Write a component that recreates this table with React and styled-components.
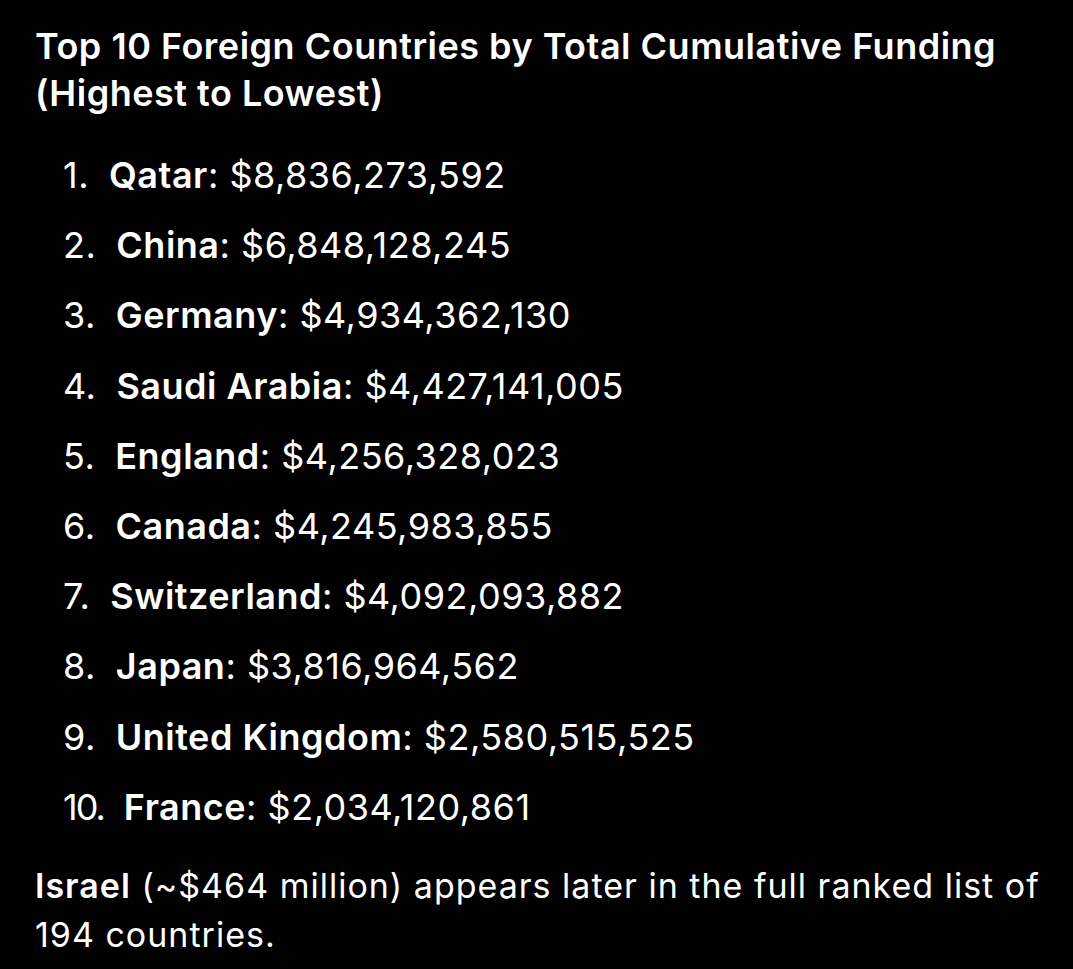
import React from "react";
import styled, { createGlobalStyle } from "styled-components";

const Global = createGlobalStyle`
  html, body { margin: 0; padding: 0; background: #000; }
  body { font-family: Inter, "Noto Sans", "Liberation Sans", sans-serif; color: #fff; }
`;

const Page = styled.div`
  width: 1073px;
  height: 969px;
  background: #000;
  box-sizing: border-box;
  padding: 23px 20px 0 35px;
  overflow: hidden;
`;

const Title = styled.h1`
  margin: 0;
  font-size: 36px;
  font-weight: 600;
  line-height: 47px;
  letter-spacing: 0.5px;
`;

const List = styled.ol`
  list-style: none;
  margin: 23px 0 0 0;
  padding: 0 0 0 28px;
  display: flex;
  flex-direction: column;
`;

const Item = styled.li`
  display: flex;
  align-items: baseline;
  gap: 20px;
  font-size: 36px;
  line-height: 70.2px;
  font-weight: 400;
  letter-spacing: 0.5px;
`;

const Num = styled.span`
  letter-spacing: ${(p) => (p.$wide ? "-2px" : "0.5px")};
`;

const Name = styled.strong`
  font-weight: 600;
`;

const Footer = styled.p`
  margin: 19px 0 0 0;
  font-size: 34px;
  line-height: 49px;
  letter-spacing: 1px;
`;

const data = [
  ["Qatar", "$8,836,273,592"],
  ["China", "$6,848,128,245"],
  ["Germany", "$4,934,362,130"],
  ["Saudi Arabia", "$4,427,141,005"],
  ["England", "$4,256,328,023"],
  ["Canada", "$4,245,983,855"],
  ["Switzerland", "$4,092,093,882"],
  ["Japan", "$3,816,964,562"],
  ["United Kingdom", "$2,580,515,525"],
  ["France", "$2,034,120,861"],
];

export default function App() {
  return (
    <>
      <Global />
      <Page>
        <Title>
          Top 10 Foreign Countries by Total Cumulative Funding
          <br />
          (Highest to Lowest)
        </Title>
        <List>
          {data.map(([name, amount], i) => (
            <Item key={name}>
              <Num $wide={i + 1 >= 10}>{i + 1}.</Num>
              <span>
                <Name>{name}</Name>: {amount}
              </span>
            </Item>
          ))}
        </List>
        <Footer>
          <Name>Israel</Name> (~$464 million) appears later in the full ranked list of 194 countries.
        </Footer>
      </Page>
    </>
  );
}
